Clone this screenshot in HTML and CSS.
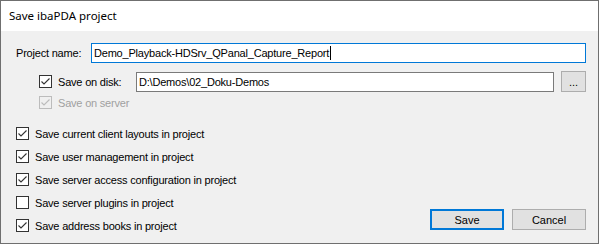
FILE: index.html
```html
<!DOCTYPE html>
<html lang="en">
<head>
    <meta charset="UTF-8">
    <title>Save ibaPDA project</title>
    <link rel="stylesheet" href="styles.css">
</head>
<body>
    <div class="window">
        <div class="titlebar">Save ibaPDA project</div>

        <div class="content">
            <div class="row">
                <span class="label name-label">Project name:</span>
                <div class="field field-focus name-field">Demo_Playback-HDSrv_QPanal_Capture_Report<span class="caret"></span></div>
            </div>

            <div class="row disk-row">
                <span class="check checked">
                    <svg width="11" height="11" viewBox="0 0 11 11"><polyline points="1.5,5.5 4,8 9.5,2.5" /></svg>
                </span>
                <span class="label disk-label">Save on disk:</span>
                <div class="field disk-field">D:\Demos\02_Doku-Demos</div>
                <button class="btn browse-btn">...</button>
            </div>

            <div class="row server-row">
                <span class="check checked disabled">
                    <svg width="11" height="11" viewBox="0 0 11 11"><polyline points="1.5,5.5 4,8 9.5,2.5" /></svg>
                </span>
                <span class="label muted">Save on server</span>
            </div>

            <div class="bottom">
                <div class="options">
                    <div class="option">
                        <span class="check checked">
                            <svg width="11" height="11" viewBox="0 0 11 11"><polyline points="1.5,5.5 4,8 9.5,2.5" /></svg>
                        </span>
                        <span class="label">Save current client layouts in project</span>
                    </div>
                    <div class="option">
                        <span class="check checked">
                            <svg width="11" height="11" viewBox="0 0 11 11"><polyline points="1.5,5.5 4,8 9.5,2.5" /></svg>
                        </span>
                        <span class="label">Save user management in project</span>
                    </div>
                    <div class="option">
                        <span class="check checked">
                            <svg width="11" height="11" viewBox="0 0 11 11"><polyline points="1.5,5.5 4,8 9.5,2.5" /></svg>
                        </span>
                        <span class="label">Save server access configuration in project</span>
                    </div>
                    <div class="option">
                        <span class="check"></span>
                        <span class="label">Save server plugins in project</span>
                    </div>
                    <div class="option">
                        <span class="check checked">
                            <svg width="11" height="11" viewBox="0 0 11 11"><polyline points="1.5,5.5 4,8 9.5,2.5" /></svg>
                        </span>
                        <span class="label">Save address books in project</span>
                    </div>
                </div>

                <div class="button-group">
                    <button class="btn dialog-btn default-btn">Save</button>
                    <button class="btn dialog-btn">Cancel</button>
                </div>
            </div>
        </div>
    </div>
</body>
</html>
```

FILE: styles.css
```css
body {
    margin: 0;
    background: #f0f0f0;
}

.window {
    width: 599px;
    height: 244px;
    box-sizing: border-box;
    border: 1px solid #6f6f6f;
    background: #f0f0f0;
    font-family: 'Liberation Sans', Arial, sans-serif;
    font-size: 11px;
    letter-spacing: -0.2px;
    color: #000;
    display: flex;
    flex-direction: column;
}

.titlebar {
    height: 30px;
    line-height: 30px;
    background: #fff;
    padding-left: 8px;
    font-family: 'Noto Sans', sans-serif;
    font-size: 11.5px;
    letter-spacing: 0;
}

.content {
    flex: 1;
    padding: 12px 12px 0 15px;
    display: flex;
    flex-direction: column;
}

.row {
    display: flex;
    align-items: center;
}

.label {
    white-space: nowrap;
}

.name-label {
    width: 75px;
}

.field {
    height: 20px;
    box-sizing: border-box;
    border: 1px solid #7a7a7a;
    background: #fff;
    padding-left: 2px;
    line-height: 18px;
    font-size: 11px;
    white-space: nowrap;
    display: flex;
    align-items: center;
}

.field-focus {
    border-color: #0078d7;
}

.name-field {
    flex: 1;
}

.caret {
    display: inline-block;
    width: 1px;
    height: 14px;
    background: #000;
    margin-left: 1px;
}

.disk-row {
    margin-top: 8px;
    padding-left: 23px;
}

.disk-label {
    width: 78px;
}

.disk-field {
    flex: 1;
    align-self: flex-end;
}

.check {
    width: 13px;
    height: 13px;
    box-sizing: border-box;
    border: 1px solid #333;
    background: #fff;
    margin-right: 6px;
    flex-shrink: 0;
    display: flex;
    align-items: center;
    justify-content: center;
}

.check svg polyline {
    fill: none;
    stroke: #333;
    stroke-width: 1.1;
}

.check.disabled {
    border-color: #bcbcbc;
    background: #f0f0f0;
}

.check.disabled svg polyline {
    stroke: #bcbcbc;
}

.server-row {
    margin-top: 4px;
    padding-left: 23px;
}

.muted {
    color: #a0a0a0;
}

.bottom {
    margin-top: 18px;
    display: flex;
    justify-content: space-between;
    align-items: flex-end;
}

.options {
    display: flex;
    flex-direction: column;
    gap: 10px;
}

.option {
    display: flex;
    align-items: center;
    height: 13px;
}

.btn {
    box-sizing: border-box;
    background: #e1e1e1;
    border: 1px solid #adadad;
    font-family: 'Liberation Sans', Arial, sans-serif;
    font-size: 11px;
    color: #000;
    padding: 0;
    margin: 0;
}

.browse-btn {
    width: 25px;
    height: 21px;
    margin-left: 7px;
    line-height: 14px;
}

.button-group {
    display: flex;
    gap: 8px;
    margin-bottom: 2px;
}

.dialog-btn {
    width: 74px;
    height: 21px;
}

.default-btn {
    border: 2px solid #0078d7;
}
```
